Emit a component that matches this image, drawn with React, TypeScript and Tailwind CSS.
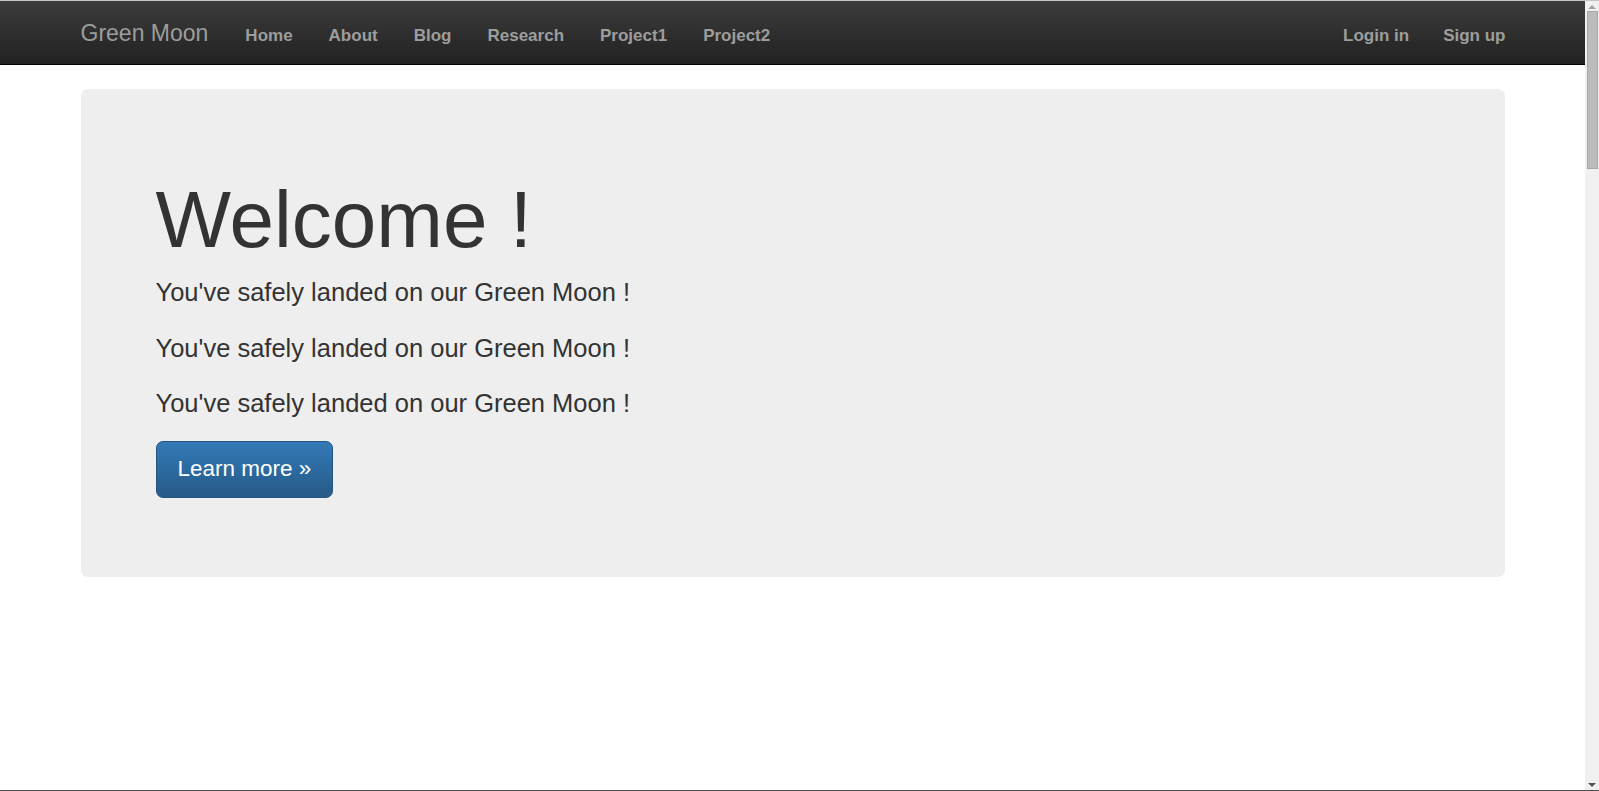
import React from 'react';

const leftLinks = ['Home', 'About', 'Blog', 'Research', 'Project1', 'Project2'];
const rightLinks = ['Login in', 'Sign up'];

const Navbar = () => (
  <nav className="h-[64px] border-b border-black bg-gradient-to-b from-[#3c3c3c] to-[#222222]">
    <div className="w-[1424px] mx-auto flex items-baseline pt-[17px]">
      <a className="text-[23px] leading-[30px] text-[#9d9d9d] mr-[19px]">Green Moon</a>
      <ul className="flex items-baseline">
        {leftLinks.map((link) => (
          <li key={link}>
            <a className="px-[18px] text-[17px] leading-[24px] font-bold text-[#9d9d9d]">{link}</a>
          </li>
        ))}
      </ul>
      <ul className="flex items-baseline ml-auto mr-[-18px]">
        {rightLinks.map((link) => (
          <li key={link}>
            <a className="px-[17px] text-[17px] leading-[24px] font-bold text-[#9d9d9d]">{link}</a>
          </li>
        ))}
      </ul>
    </div>
  </nav>
);

const Scrollbar = () => (
  <aside className="w-[14px] bg-[#f0f0f0] flex flex-col items-center">
    <svg width="8" height="5" viewBox="0 0 8 5" className="mt-[3px]">
      <path d="M0 5 L4 1 L8 5 Z" fill="#a3a3a3" />
    </svg>
    <div className="mt-[2px] w-[11px] h-[158px] bg-[#bcbcbc] border border-[#a8a8a8]" />
    <div className="flex-1" />
    <svg width="8" height="5" viewBox="0 0 8 5" className="mb-[2px]">
      <path d="M0 0 L8 0 L4 4 Z" fill="#505050" />
    </svg>
  </aside>
);

const App = () => {
  const lines = [1, 2, 3];

  return (
    <div
      className="h-[791px] flex border-t border-b border-t-[#c4c4c4] border-b-[#4d4d4d] bg-white text-[#333333] overflow-hidden"
      style={{ fontFamily: '"Liberation Sans", Arial, sans-serif' }}
    >
      <main className="flex-1 min-w-0">
        <Navbar />

        <div className="w-[1424px] mx-auto mt-[24px]">
          {/* Jumbotron */}
          <div className="bg-[#eeeeee] rounded-[7px] pl-[75px] pt-[87px] pb-[79px]">
            <h1 className="text-[80px] leading-[87px] mb-[11px]">Welcome !</h1>
            {lines.map((i) => (
              <p key={i} className="text-[25.5px] leading-[36px] mb-[19.5px]">
                You've safely landed on our Green Moon !
              </p>
            ))}
            <a className="inline-block h-[57px] px-[21px] py-[12.5px] text-[22.5px] leading-[30px] text-white rounded-[7px] border border-[#245580] bg-gradient-to-b from-[#337ab7] to-[#265a88]">
              Learn more »
            </a>
          </div>
        </div>
      </main>
      <Scrollbar />
    </div>
  );
};

export default App;
